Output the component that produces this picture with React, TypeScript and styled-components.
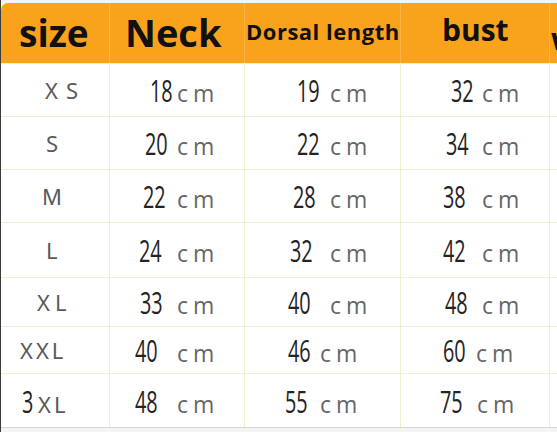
import styled, { createGlobalStyle } from 'styled-components';

const GlobalStyle = createGlobalStyle`
  html, body {
    margin: 0;
    padding: 0;
    background: #f4f4f4;
  }
`;

interface Measure {
  num: string;
  numX: number;
  cmX: number;
}

interface SizeRow {
  size: string;
  spacing: number;
  labelX: number;
  height: number;
  values: Measure[];
}

// x positions are measured from the left edge of each column
const rows: SizeRow[] = [
  { size: 'XS', spacing: 8, labelX: 44, height: 53, values: [
    { num: '18', numX: 40, cmX: 67 }, { num: '19', numX: 52, cmX: 85 }, { num: '32', numX: 50, cmX: 81 }] },
  { size: 'S', spacing: 0, labelX: 45, height: 53, values: [
    { num: '20', numX: 35, cmX: 67 }, { num: '22', numX: 52, cmX: 85 }, { num: '34', numX: 45, cmX: 81 }] },
  { size: 'M', spacing: 0, labelX: 41, height: 53, values: [
    { num: '22', numX: 33, cmX: 67 }, { num: '28', numX: 48, cmX: 85 }, { num: '38', numX: 42, cmX: 81 }] },
  { size: 'L', spacing: 0, labelX: 45, height: 55, values: [
    { num: '24', numX: 29, cmX: 67 }, { num: '32', numX: 45, cmX: 85 }, { num: '42', numX: 42, cmX: 81 }] },
  { size: 'XL', spacing: 5, labelX: 36, height: 49, values: [
    { num: '33', numX: 30, cmX: 67 }, { num: '40', numX: 43, cmX: 85 }, { num: '48', numX: 44, cmX: 81 }] },
  { size: 'XXL', spacing: 3, labelX: 19, height: 47, values: [
    { num: '40', numX: 25, cmX: 67 }, { num: '46', numX: 43, cmX: 75 }, { num: '60', numX: 42, cmX: 75 }] },
  { size: '3XL', spacing: 3, labelX: 21, height: 54, values: [
    { num: '48', numX: 25, cmX: 67 }, { num: '55', numX: 40, cmX: 75 }, { num: '75', numX: 39, cmX: 76 }] },
];

const Page = styled.div`
  height: 432px;
  overflow: hidden;
  box-sizing: border-box;
  padding-top: 3px;
  border-left: 1px solid #3c3c3c;
  background: #f4f4f4;
`;

const Table = styled.div`
  display: flex;
  flex-direction: column;
  width: 640px;
  background: #fff;
  border-radius: 7px 0 0 0;
  overflow: hidden;
  border-bottom: 1px solid #d6d6d6;
`;

const Row = styled.div<{ $height: number }>`
  display: grid;
  grid-template-columns: 109px 135px 156px 149px 91px;
  height: ${p => p.$height}px;
`;

const HeaderRow = styled(Row)`
  background: #f9a31d;
`;

const HeadCell = styled.div<{ $size: number; $left: number; $lift?: number; $drop?: number; $track?: number }>`
  display: flex;
  align-items: center;
  padding-left: ${p => p.$left}px;
  padding-bottom: ${p => p.$lift ?? 0}px;
  padding-top: ${p => p.$drop ?? 0}px;
  box-sizing: border-box;
  border-right: 1px solid rgba(255, 255, 255, 0.18);
  font-family: "Open Sans", Lato, sans-serif;
  font-weight: 700;
  font-size: ${p => p.$size}px;
  letter-spacing: ${p => p.$track ?? 0}px;
  line-height: 1;
  color: #111;
  white-space: nowrap;
`;

const Cell = styled.div<{ $left: number }>`
  display: flex;
  align-items: center;
  padding-left: ${p => p.$left}px;
  box-sizing: border-box;
  border-right: 1px solid #f0f0cf;
  border-top: 1px solid #f0f0cf;
`;

const SizeLabel = styled.span<{ $spacing: number }>`
  font-family: "Noto Sans", "Open Sans", sans-serif;
  font-size: 22px;
  color: #5a5a5a;
  letter-spacing: ${p => p.$spacing}px;
`;

const Value = styled.div`
  display: flex;
  align-items: baseline;
`;

const Digits = styled.span<{ $width: number }>`
  display: inline-block;
  width: ${p => p.$width}px;
  font-family: "Open Sans", "DejaVu Sans", sans-serif;
  font-size: 31px;
  color: #242424;
  transform: scaleX(0.64);
  transform-origin: left center;
  white-space: nowrap;
`;

const Unit = styled.span`
  font-family: "Open Sans", "Noto Sans", sans-serif;
  font-size: 23px;
  color: #666;
  letter-spacing: 5px;
`;

const renderLabel = (row: SizeRow) => {
  if (row.size === '3XL') {
    return (
      <Value>
        <Digits $width={16}>3</Digits>
        <SizeLabel $spacing={row.spacing}>XL</SizeLabel>
      </Value>
    );
  }
  return <SizeLabel $spacing={row.spacing}>{row.size}</SizeLabel>;
};

const App = () => (
  <>
    <GlobalStyle />
    <Page>
      <Table>
        <HeaderRow $height={60}>
          <HeadCell $size={37} $left={18} $lift={2}>size</HeadCell>
          <HeadCell $size={38} $left={15} $lift={3}>Neck</HeadCell>
          <HeadCell $size={22} $left={1} $lift={4} $track={0.5}>Dorsal length</HeadCell>
          <HeadCell $size={30} $left={41} $lift={7}>bust</HeadCell>
          <HeadCell $size={30} $left={1} $drop={12}>w</HeadCell>
        </HeaderRow>
        {rows.map(row => (
          <Row key={row.size} $height={row.height}>
            <Cell $left={row.labelX}>{renderLabel(row)}</Cell>
            {row.values.map((v, i) => (
              <Cell key={i} $left={v.numX}>
                <Value>
                  <Digits $width={v.cmX - v.numX}>{v.num}</Digits>
                  <Unit>cm</Unit>
                </Value>
              </Cell>
            ))}
            <Cell $left={0} />
          </Row>
        ))}
      </Table>
    </Page>
  </>
);

export default App;
